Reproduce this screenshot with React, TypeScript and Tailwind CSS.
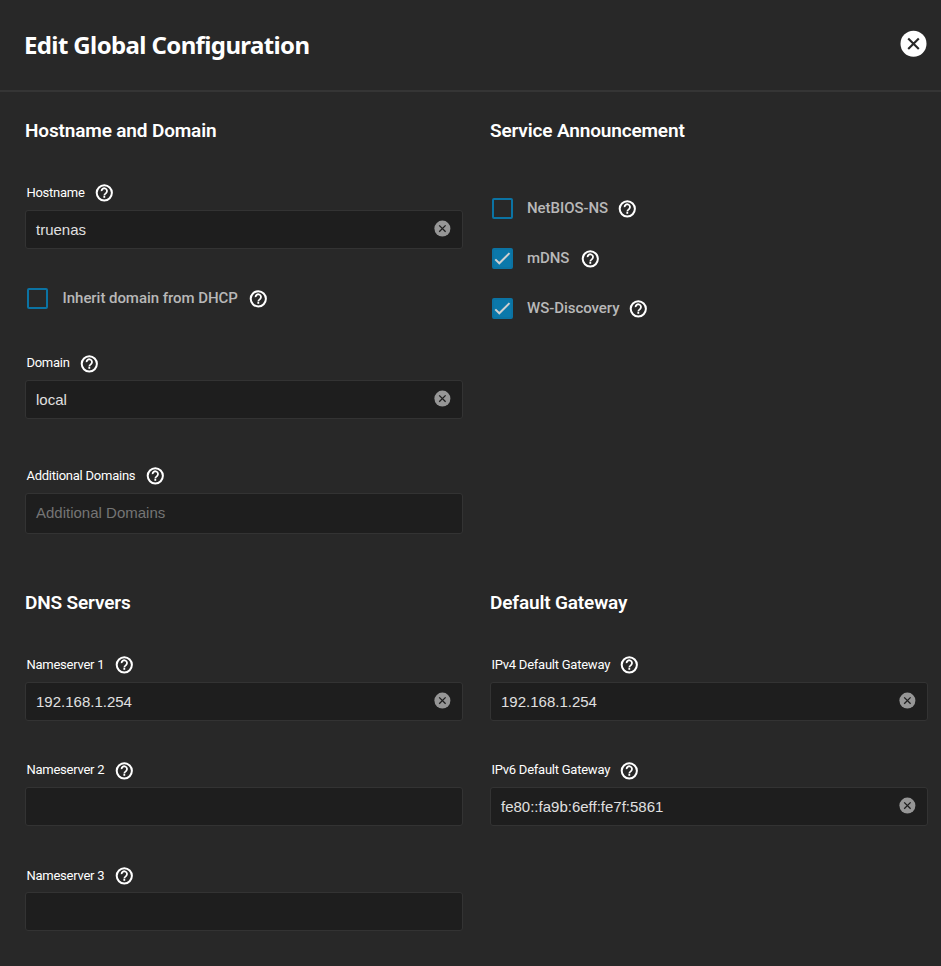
import type { ReactNode } from "react";

function Heading({ children, width }: { children: ReactNode; width: number }) {
  return (
    <h3 className="h-[28px] font-[Roboto,sans-serif] text-[19px] leading-[28px] font-semibold tracking-[-0.15px] whitespace-nowrap text-white">
      <FitText width={width}>{children}</FitText>
    </h3>
  );
}

/** Reserves a fixed advance for a text run so the icon after it lines up. */
function FitText({ children, width }: { children: ReactNode; width: number }) {
  return (
    <span className="inline-block whitespace-nowrap" style={{ width }}>
      {children}
    </span>
  );
}

function Help() {
  return (
    <svg viewBox="0 0 21 21" className="block size-[21px] shrink-0" fill="none">
      <circle cx="10.3" cy="10.8" r="7.6" stroke="#fff" strokeWidth="2" />
      <path
        d="M7.6 9.1a2.7 2.7 0 1 1 4.6 1.8c-.9.8-1.9 1.3-1.9 2.6"
        stroke="#fff"
        strokeWidth="1.8"
      />
      <rect x="9.4" y="14" width="1.8" height="1.8" fill="#fff" />
    </svg>
  );
}

function ClearIcon() {
  return (
    <svg viewBox="0 0 20 20" className="mb-[1px] size-[20px] shrink-0" fill="none">
      <circle cx="10.4" cy="9.6" r="8" fill="#969696" />
      <path d="m7.2 6.4 6.4 6.4m0-6.4-6.4 6.4" stroke="#1e1e1e" strokeWidth="1.3" />
    </svg>
  );
}

type FieldProps = {
  label: string;
  labelWidth: number;
  value?: string;
  placeholder?: string;
  tall?: boolean;
  low?: boolean;
  labelLow?: boolean;
};

function Field({ label, labelWidth, value, placeholder, tall, low, labelLow }: FieldProps) {
  return (
    <div>
      <div className="flex h-[28px] items-start pl-[1.4px] text-[13px] leading-[21px] tracking-[-0.24px] text-white">
        <span className={labelLow ? "pt-[1px]" : ""}>
          <FitText width={labelWidth}>{label}</FitText>
        </span>
        <span className={low ? "ml-[9.6px] pt-[1px]" : "ml-[9.6px]"}>
          <Help />
        </span>
      </div>
      <div
        className={`flex items-center justify-between rounded-[3px] border border-[#333333] bg-[#1e1e1e] pr-[10px] pl-[10px] font-['Liberation_Sans',Arial,sans-serif] text-[15px] ${tall ? "h-[41px]" : "h-[39px]"}`}
      >
        {placeholder ? (
          <span className="text-[#757575]">{placeholder}</span>
        ) : (
          <span className="pt-[2px] text-[#e0e0e0]">{value}</span>
        )}
        {value && <ClearIcon />}
      </div>
    </div>
  );
}

function Check({
  label,
  width,
  checked,
  low,
}: {
  label: string;
  width: number;
  checked?: boolean;
  low?: boolean;
}) {
  return (
    <div className="flex h-[21px] items-center pl-[2px]">
      <span
        className={`flex size-[21px] shrink-0 items-center justify-center rounded-[2px] border-2 border-[#0b73a3] ${checked ? "bg-[#0b78aa]" : ""}`}
      >
        {checked && (
          <svg viewBox="0 0 17 17" className="size-[17px] shrink-0" fill="none" stroke="#d0d0d0" strokeWidth="2">
            <path d="M1.3 9.4 5.3 13.3 15.5 3.1" />
          </svg>
        )}
      </span>
      <span
        className={`flex pb-[1px] text-[15px] leading-[20px] font-medium tracking-[-0.05px] text-[#b8b8b8] ${low ? "ml-[14.6px]" : "ml-[14px]"}`}
      >
        <FitText width={width}>{label}</FitText>
      </span>
      <span className={low ? "ml-[10px]" : "ml-[10px] pb-[1px]"}>
        <Help />
      </span>
    </div>
  );
}

export default function App() {
  return (
    <div className="h-[966px] w-[941px] overflow-hidden bg-[#282828] font-[Roboto,sans-serif]">
      <header className="flex h-[92px] items-start justify-between border-b-2 border-[#353535] pr-[14px] pl-[24px]">
        <h1 className="mt-[27px] font-['Noto_Sans',sans-serif] text-[24px] leading-[36px] font-bold tracking-[-0.62px] whitespace-nowrap text-white">
          Edit Global Configuration
        </h1>
        <svg viewBox="0 0 27 27" className="mt-[30px] size-[27px]" fill="none">
          <circle cx="13.5" cy="13.8" r="13" fill="#fff" />
          <path d="m8.2 8.5 10.6 10.6m0-10.6L8.2 19.1" stroke="#282828" strokeWidth="2.1" />
        </svg>
      </header>

      <main className="pl-[25px]">
        <div className="flex h-[472px] gap-[27px] pt-[25px]">
          <section className="w-[438px]">
            <Heading width={192}>Hostname and Domain</Heading>
            <div className="mt-[37px]">
              <Field label="Hostname" labelWidth={58} value="truenas" />
            </div>
            <div className="mt-[39px]">
              <Check label="Inherit domain from DHCP" width={175} low />
            </div>
            <div className="mt-[43px]">
              <Field label="Domain" labelWidth={43} value="local" low />
            </div>
            <div className="mt-[46px]">
              <Field label="Additional Domains" labelWidth={109} placeholder="Additional Domains" tall />
            </div>
          </section>
          <section className="w-[438px]">
            <Heading width={195}>Service Announcement</Heading>
            <div className="mt-[53px] flex flex-col gap-[29px]">
              <Check label="NetBIOS-NS" width={80} />
              <Check label="mDNS" width={43} checked />
              <Check label="WS-Discovery" width={91} checked />
            </div>
          </section>
        </div>

        <div className="flex gap-[27px] pt-[25px]">
          <section className="w-[438px]">
            <Heading width={105}>DNS Servers</Heading>
            <div className="mt-[37px] flex flex-col gap-[38px]">
              <Field label="Nameserver 1" labelWidth={78} value="192.168.1.254" />
              <Field label="Nameserver 2" labelWidth={78} low />
              <Field label="Nameserver 3" labelWidth={78} low labelLow />
            </div>
          </section>
          <section className="w-[438px]">
            <Heading width={140}>Default Gateway</Heading>
            <div className="mt-[37px] flex flex-col gap-[38px]">
              <Field label="IPv4 Default Gateway" labelWidth={118} value="192.168.1.254" />
              <Field label="IPv6 Default Gateway" labelWidth={118} value="fe80::fa9b:6eff:fe7f:5861" low />
            </div>
          </section>
        </div>
      </main>
    </div>
  );
}
